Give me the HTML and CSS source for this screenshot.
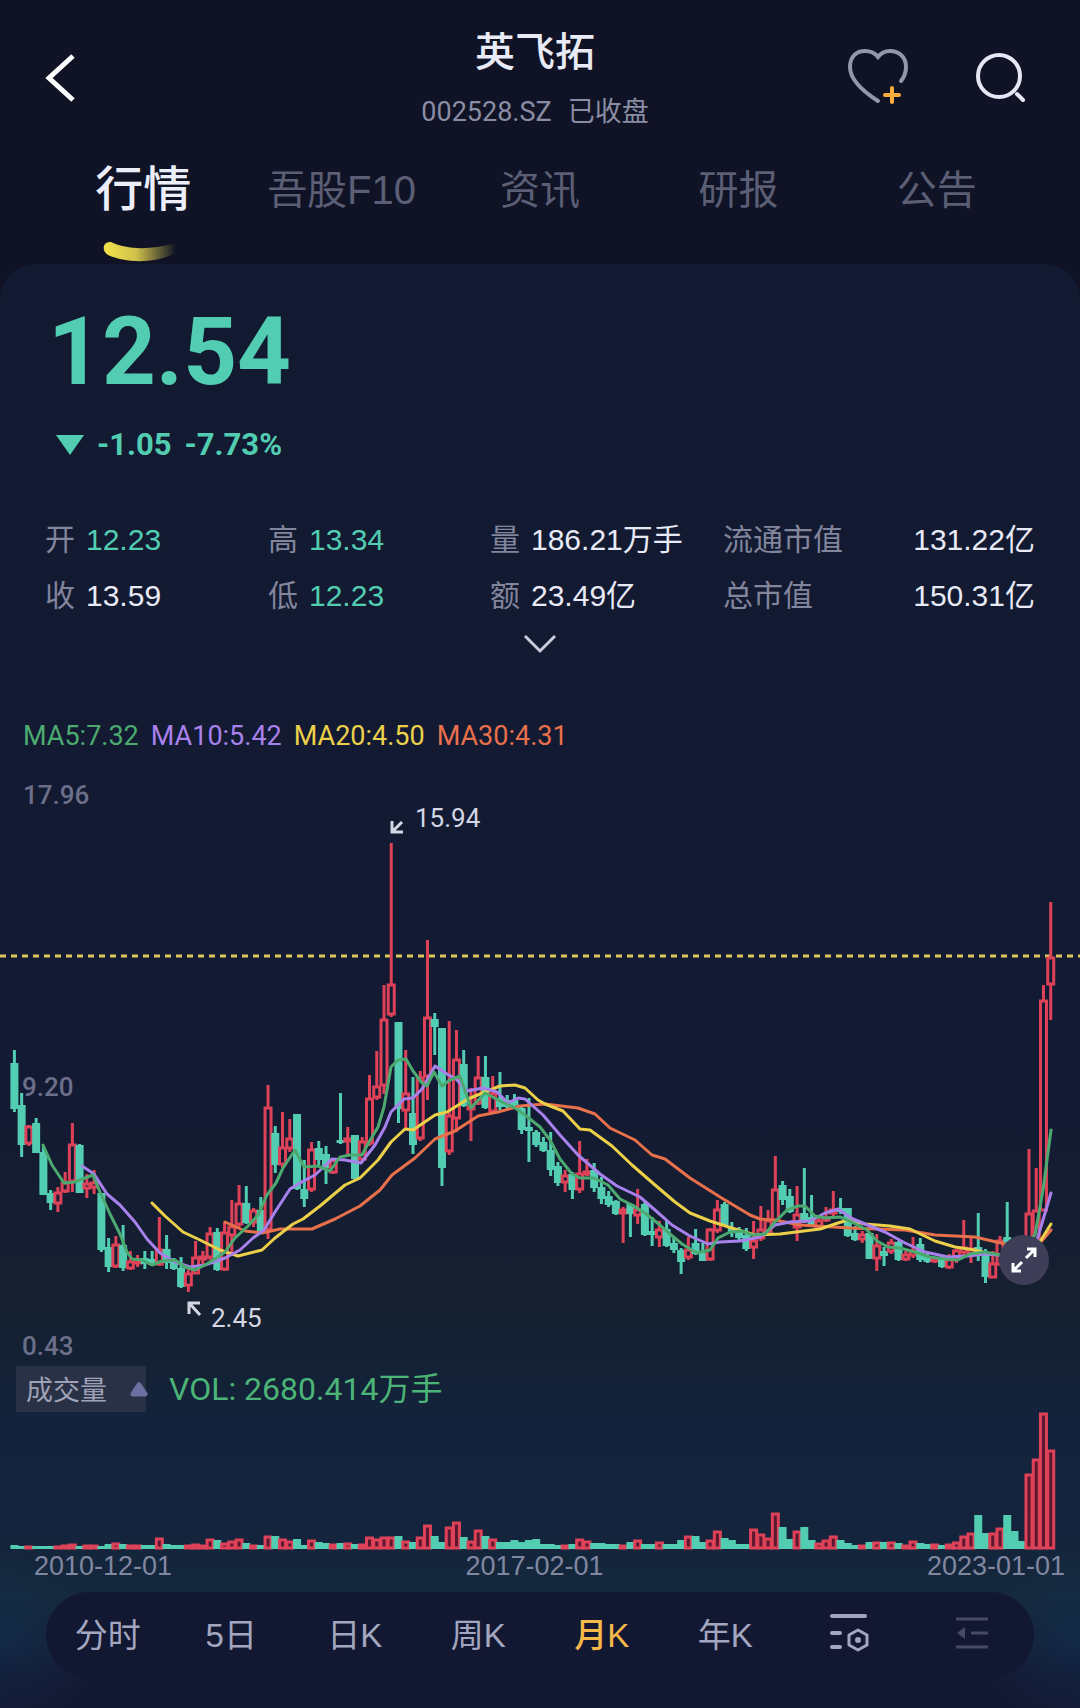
FILE: index.html
```
<!DOCTYPE html>
<html lang="zh-CN">
<head>
    <meta charset="utf-8">
    <meta name="viewport" content="width=device-width, initial-scale=1">
    <title>英飞拓 002528.SZ</title>
    <link rel="stylesheet" href="styles.css">
</head>
<body>
    <header class="header">
        <div class="topbar">
            <button class="icon-btn back" aria-label="返回">
                <svg width="36" height="56" viewBox="0 0 36 56"><path d="M31 6L7 28l24 22" fill="none" stroke="#fff" stroke-width="5"/></svg>
            </button>
            <div class="title">
                <h1>英飞拓</h1>
                <p><span>002528.SZ</span><span>已收盘</span></p>
            </div>
            <div class="actions">
                <button class="icon-btn" aria-label="加自选">
                    <svg width="64" height="60" viewBox="0 0 64 60" fill="none" stroke-linecap="round">
                        <path d="M32 53C18 44 4 32 4 19C4 8 11 3 19 3C25 3 29 5 32 9C35 5 39 3 44 3C53 3 60 9 60 19C60 24 59 28 55 33" stroke="#9497ab" stroke-width="4"/>
                        <path d="M46 40v14M39 47h14" stroke="#f8ae3c" stroke-width="4"/>
                    </svg>
                </button>
                <button class="icon-btn" aria-label="搜索">
                    <svg width="56" height="56" viewBox="0 0 56 56" fill="none" stroke="#e6e7f5" stroke-width="4" stroke-linecap="round">
                        <circle cx="27" cy="28" r="21"/>
                        <path d="M45 46l6 6"/>
                    </svg>
                </button>
            </div>
        </div>
        <nav class="tabs">
            <a href="#" class="tab active">行情
                <svg class="swoosh" width="76" height="24" viewBox="0 0 76 24">
                    <defs>
                        <linearGradient id="fade">
                            <stop offset="0" stop-color="#f3e24a"/>
                            <stop offset="0.45" stop-color="#cfc04a"/>
                            <stop offset="1" stop-color="#cfc04a" stop-opacity="0"/>
                        </linearGradient>
                    </defs>
                    <path d="M9 2C25 10 50 10 74 3L74 13C52 24 24 23 6 15C-1 11 1 1 9 2Z" fill="url(#fade)"/>
                </svg>
            </a>
            <a href="#" class="tab">吾股F10</a>
            <a href="#" class="tab">资讯</a>
            <a href="#" class="tab">研报</a>
            <a href="#" class="tab">公告</a>
        </nav>
    </header>

    <main class="panel">
        <section class="quote">
            <div class="price">12.54</div>
            <div class="change">
                <svg width="28" height="20" viewBox="0 0 28 20"><path d="M0 0h28L14 20z" fill="#52cdb2"/></svg>
                <span>-1.05</span>
                <span>-7.73%</span>
            </div>
        </section>

        <dl class="stats">
            <div><dt>开</dt><dd class="down">12.23</dd></div>
            <div><dt>高</dt><dd class="down">13.34</dd></div>
            <div><dt>量</dt><dd>186.21万手</dd></div>
            <div class="wide"><dt>流通市值</dt><dd>131.22亿</dd></div>
            <div><dt>收</dt><dd>13.59</dd></div>
            <div><dt>低</dt><dd class="down">12.23</dd></div>
            <div><dt>额</dt><dd>23.49亿</dd></div>
            <div class="wide"><dt>总市值</dt><dd>150.31亿</dd></div>
        </dl>
        <button class="icon-btn more" aria-label="展开">
            <svg width="34" height="20" viewBox="0 0 34 20"><path d="M2 2l15 15L32 2" fill="none" stroke="#c9cbdb" stroke-width="3"/></svg>
        </button>

        <div class="legend">
            <span class="ma5">MA5:7.32</span>
            <span class="ma10">MA10:5.42</span>
            <span class="ma20">MA20:4.50</span>
            <span class="ma30">MA30:4.31</span>
        </div>

        <div class="chart">
            <svg id="kline" viewBox="0 760 1080 606">
                <g class="axis">
                    <text x="23" y="804">17.96</text>
                    <text x="22" y="1096">9.20</text>
                    <text x="22" y="1355">0.43</text>
                </g>
                <g class="mark">
                    <text x="415" y="827">15.94</text>
                    <text x="211" y="1327">2.45</text>
                    <path d="M392 821v11h11M393 831l9-9"/>
                    <path d="M189 1314v-11h11M190 1304l10 11"/>
                </g>
            </svg>
            <button class="expand" aria-label="全屏">
                <svg width="28" height="28" viewBox="0 0 28 28" fill="none" stroke="#fff" stroke-width="3"><path d="M17 3h8v8M25 3l-9 9M3 17v8h8M3 25l9-9"/></svg>
            </button>
        </div>

        <div class="vol-head">
            <div class="picker">
                <select aria-label="指标">
                    <option>成交量</option>
                </select>
                <svg width="18" height="15" viewBox="0 0 18 15"><path d="M9 3L15 12H3z" fill="#6c70a0" stroke="#6c70a0" stroke-width="5" stroke-linejoin="round"/></svg>
            </div>
            <span class="vol">VOL: 2680.414万手</span>
        </div>
        <svg id="volume" viewBox="0 0 1080 138"></svg>
        <div class="dates"><span>2010-12-01</span><span>2017-02-01</span><span>2023-01-01</span></div>

        <div class="periods">
            <button>分时</button>
            <button>5日</button>
            <button>日K</button>
            <button>周K</button>
            <button class="active">月K</button>
            <button>年K</button>
            <button aria-label="指标设置">
                <svg width="40" height="40" viewBox="0 0 40 40" fill="none" stroke="#a3a6bf" stroke-linecap="round">
                    <path d="M3 3h33M3 20h8M3 34h8" stroke-width="4"/>
                    <path d="M29 17l9 5v10l-9 5-9-5V22z" stroke-width="3" stroke-linejoin="round"/>
                    <circle cx="29" cy="27" r="3" fill="#a3a6bf" stroke="none"/>
                </svg>
            </button>
            <button aria-label="收起">
                <svg width="34" height="34" viewBox="0 0 34 34" fill="none" stroke="#474a63" stroke-width="3">
                    <path d="M1 3h32M16 17h17M1 31h32"/>
                    <path d="M2 17l8-6v12z" fill="#474a63" stroke="none"/>
                </svg>
            </button>
        </div>
    </main>

    <script src="chart.js"></script>
</body>
</html>
```
FILE: styles.css
```
* {
    box-sizing: border-box;
}
body {
    display: flex;
    flex-direction: column;
    min-height: 100vh;
    margin: 0;
    background-color: #0f1325;
    color: #e8eaf6;
    font-family: "Liberation Sans", "Noto Sans CJK SC", sans-serif;
}
h1, p, dl, dd {
    margin: 0;
}
button, select {
    font-family: inherit;
    background: none;
    border: none;
    padding: 0;
    cursor: pointer;
}
svg {
    display: block;
}

/* header */
.topbar {
    display: grid;
    grid-template-columns: 1fr auto 1fr;
    height: 144px;
    padding: 0 52px 0 42px;
}
.back {
    justify-self: start;
    align-self: start;
    margin-top: 50px;
}
.title {
    text-align: center;
    padding-top: 22px;
}
h1 {
    font-size: 40px;
    line-height: 60px;
    font-weight: 500;
}
.title p {
    display: flex;
    justify-content: center;
    gap: 16px;
    font: 27px/32px Roboto, "Noto Sans CJK SC", sans-serif;
    margin-top: 14px;
    color: #8a8da3;
}
.actions {
    display: flex;
    justify-content: flex-end;
    align-items: flex-start;
    gap: 62px;
    padding-top: 48px;
}
.tabs {
    display: grid;
    grid-template-columns: repeat(5, 1fr);
    height: 120px;
    padding: 0 44px;
    text-align: center;
    line-height: 92px;
}
.tab {
    position: relative;
    color: #5b5e75;
    font-size: 40px;
    text-decoration: none;
}
.tab.active {
    color: #eceefa;
    font-size: 48px;
    font-weight: 500;
}
.swoosh {
    position: absolute;
    left: 58px;
    bottom: 0;
}

/* main panel */
.panel {
    flex: 1;
    border-radius: 36px 36px 0 0;
    padding-bottom: 18px;
    background:
        radial-gradient(ellipse 110px 90px at 0 1375px, rgba(18, 58, 96, 0.4), transparent),
        radial-gradient(ellipse 110px 90px at 100% 1375px, rgba(18, 58, 96, 0.4), transparent),
        linear-gradient(#121a31 0, #131a33 820px, #152030 1050px, #13233c 1160px, #13243c 1270px, #15283b 1330px, #131832 1414px);
}
.quote {
    padding: 32px 48px 0;
    font-family: Roboto, sans-serif;
    font-weight: 700;
    color: #52cdb2;
}
.price {
    font-size: 94px;
    line-height: 112px;
}
.change {
    display: flex;
    align-items: center;
    gap: 13px;
    padding: 17px 8px;
    font-size: 31px;
    line-height: 40px;
}
.stats {
    display: grid;
    grid-template-columns: 223fr 222fr 233fr 312fr;
    row-gap: 12px;
    padding: 36px 45px 0;
    font-size: 30px;
    line-height: 44px;
}
.stats div {
    display: flex;
    gap: 11px;
}
.stats .wide {
    justify-content: space-between;
}
dt {
    color: #82859c;
}
.down {
    color: #52cdb2;
}
.more {
    display: block;
    margin: 16px auto 0;
}
.legend {
    display: flex;
    gap: 12px;
    padding: 66px 23px 8px;
    font: 27px/32px Roboto, sans-serif;
}
.ma5 {
    color: #4caa70;
}
.ma10 {
    color: #a981ec;
}
.ma20 {
    color: #ecd04a;
}
.ma30 {
    color: #e8704a;
}

/* charts */
.chart {
    position: relative;
}
#kline, #volume {
    width: 100%;
}
.axis text, .mark text {
    font: 500 26px Roboto, sans-serif;
    fill: #6b6f8a;
}
.mark text {
    font-weight: 400;
    fill: #d4d6e4;
}
.mark path {
    fill: none;
    stroke: #d4d6e4;
    stroke-width: 3;
}
.line {
    fill: none;
    stroke: currentColor;
    stroke-width: 3;
    stroke-linejoin: round;
    stroke-linecap: round;
}
.rise {
    fill: none;
    stroke: #dd4259;
    stroke-width: 3;
}
.rise-bar {
    fill: #5a1830;
}
.fall {
    fill: #52cdb2;
}
.current {
    stroke: #dcc75a;
    stroke-width: 3;
    stroke-dasharray: 6 5;
}
.expand {
    position: absolute;
    right: 31px;
    bottom: 81px;
    width: 50px;
    height: 50px;
    border-radius: 50%;
    background-color: #3f3e58;
}
.expand svg {
    margin: 0 auto;
}
.vol-head {
    display: flex;
    align-items: center;
    gap: 23px;
    padding-left: 16px;
    height: 46px;
}
.picker {
    display: flex;
    align-items: center;
    height: 46px;
    background-color: #293146;
}
.picker select {
    appearance: none;
    width: 114px;
    height: 46px;
    padding: 4px 0 0 10px;
    color: #9fa2b6;
    font-size: 27px;
}
.picker svg {
    margin-right: -2px;
}
.vol {
    font: 32px/44px Roboto, "Noto Sans CJK SC", sans-serif;
    color: #4cb477;
}
.dates {
    display: grid;
    grid-template-columns: 431fr 461fr auto;
    padding: 0 15px 0 34px;
    font-size: 27px;
    line-height: 32px;
    color: #8187a0;
}

/* period switch */
.periods {
    display: grid;
    grid-template-columns: repeat(8, 1fr);
    place-items: center;
    height: 86px;
    margin: 10px 46px 0;
    padding-bottom: 4px;
    border-radius: 44px;
    background-color: #131832;
}
.periods button {
    color: #a3a6bf;
    font-size: 33px;
}
.periods .active {
    color: #f8b84a;
    font-weight: 500;
}
```
FILE: chart.js
```
// one row per month: direction (r = up, g = down), high, body top, body bottom, low, volume
const months = `
g 1050 1063 1109 1112 4|g 1093 1105 1145 1157 3|r 1125 1126 1144 1146 3|g 1118 1123 1153 1153 3
g 1145 1152 1195 1195 3|g 1190 1193 1203 1210 3|r 1187 1192 1204 1212 3|r 1172 1182 1192 1193 4
r 1123 1144 1182 1192 5|g 1144 1145 1193 1193 3|r 1174 1183 1189 1198 4|r 1170 1182 1188 1194 4
g 1193 1193 1250 1252 3|g 1238 1247 1267 1272 5|r 1236 1244 1267 1268 6|g 1225 1245 1268 1271 5
r 1251 1261 1269 1270 4|r 1255 1259 1264 1267 4|g 1251 1258 1264 1269 4|g 1251 1259 1265 1266 4
r 1217 1249 1265 1266 11|g 1235 1249 1263 1269 5|g 1258 1260 1269 1270 4|g 1257 1268 1287 1288 4
r 1269 1273 1286 1292 4|r 1241 1257 1274 1274 5|r 1251 1256 1260 1264 4|r 1227 1233 1258 1260 10
g 1228 1232 1270 1271 9|r 1222 1232 1270 1271 6|r 1200 1226 1236 1256 8|r 1185 1203 1225 1227 10
g 1186 1203 1223 1224 6|r 1208 1210 1223 1227 4|g 1197 1210 1231 1232 4|r 1085 1107 1230 1239 13
g 1126 1133 1165 1173 13|r 1112 1147 1165 1168 10|r 1119 1138 1149 1152 8|g 1114 1114 1189 1190 10
g 1160 1189 1199 1207 4|r 1142 1149 1190 1192 9|g 1141 1148 1160 1165 7|g 1146 1154 1168 1184 6
r 1158 1160 1173 1174 5|g 1093 1140 1143 1144 6|r 1127 1138 1142 1156 6|g 1135 1135 1179 1180 5
r 1137 1141 1160 1161 5|r 1075 1098 1144 1146 12|r 1051 1086 1098 1100 10|r 985 1019 1086 1094 12
r 843 984 1015 1017 12|g 1022 1022 1109 1123 13|r 1050 1093 1111 1130 8|g 1077 1113 1145 1154 7
r 1071 1077 1139 1141 12|r 940 1017 1077 1100 24|g 1013 1019 1027 1055 13|g 1028 1028 1168 1186 7
r 1021 1115 1152 1155 22|r 1030 1059 1119 1132 27|g 1050 1064 1106 1107 12|r 1088 1106 1110 1141 8
r 1056 1077 1104 1105 19|g 1056 1077 1108 1109 13|r 1076 1093 1112 1113 10|g 1072 1098 1107 1110 7
g 1095 1100 1107 1109 7|g 1094 1100 1105 1108 9|g 1106 1108 1130 1134 7|g 1098 1127 1131 1162 9
g 1130 1132 1145 1147 10|g 1137 1142 1151 1152 5|g 1132 1150 1170 1176 5|g 1162 1166 1183 1186 4
r 1170 1175 1183 1192 4|g 1172 1174 1190 1199 5|r 1141 1173 1190 1193 10|r 1159 1171 1175 1176 8
g 1163 1170 1188 1192 6|g 1177 1187 1199 1204 6|g 1191 1196 1205 1207 5|g 1200 1201 1214 1215 5
r 1207 1209 1214 1243 4|g 1203 1204 1214 1237 7|r 1189 1209 1216 1224 9|g 1201 1204 1235 1236 5
g 1217 1231 1235 1246 5|r 1221 1229 1238 1247 7|g 1221 1229 1246 1247 5|g 1238 1243 1250 1253 5
g 1248 1250 1262 1274 9|r 1237 1249 1258 1260 13|g 1229 1243 1254 1255 13|g 1243 1253 1261 1261 7
r 1228 1229 1260 1261 9|r 1200 1209 1231 1233 18|g 1202 1204 1225 1226 11|g 1222 1228 1233 1237 9
g 1227 1230 1238 1240 5|g 1228 1235 1249 1251 5|r 1221 1240 1248 1259 20|r 1206 1229 1239 1241 15
r 1210 1220 1233 1234 11|r 1156 1189 1221 1222 36|g 1181 1185 1200 1205 22|g 1189 1196 1212 1213 10
r 1186 1214 1228 1241 18|g 1168 1213 1221 1223 22|g 1195 1217 1226 1227 9|r 1218 1220 1229 1230 6
r 1207 1217 1221 1222 9|r 1191 1209 1214 1216 13|g 1198 1208 1212 1214 9|g 1208 1208 1236 1237 6
g 1226 1233 1240 1241 4|r 1231 1234 1240 1243 4|g 1232 1233 1259 1259 7|r 1234 1245 1259 1271 7
g 1247 1251 1256 1266 7|r 1239 1242 1252 1254 7|g 1241 1242 1260 1261 6|r 1251 1254 1260 1261 4
r 1237 1250 1256 1258 8|g 1238 1244 1260 1262 6|g 1253 1256 1262 1263 5|r 1257 1259 1261 1263 5
g 1256 1258 1267 1268 4|r 1254 1259 1268 1269 5|r 1249 1250 1258 1263 7|r 1220 1247 1253 1255 13
r 1236 1248 1254 1263 16|g 1213 1247 1254 1261 34|g 1249 1252 1277 1283 16|r 1251 1263 1278 1278 16
r 1236 1240 1265 1266 21|g 1202 1237 1260 1262 34|g 1240 1244 1258 1262 18|g 1242 1250 1260 1264 8
r 1149 1213 1260 1262 75|r 1168 1210 1260 1262 90|r 985 1000 1211 1211 136|r 902 957 985 1020 99
`.trim().split(/[|\n]/).map(row => row.split(' '));

const averages = {
    ma30: '225,1222 245,1231 262,1233 280,1229 312,1229 335,1219 360,1206 380,1190 392,1175 415,1158 435,1139 455,1131 478,1116 498,1112 520,1106 545,1104 578,1108 595,1114 610,1128 635,1140 652,1155 665,1159 690,1178 720,1197 750,1215 760,1219 775,1220 800,1225 850,1228 905,1230 935,1235 975,1237 1005,1244 1030,1250 1040,1243 1051,1230',
    ma20: '152,1203 165,1216 183,1232 200,1240 220,1250 238,1256 262,1250 275,1238 293,1224 303,1219 320,1206 345,1185 360,1178 378,1160 391,1142 405,1129 413,1130 435,1115 447,1112 468,1099 485,1092 500,1086 515,1085 525,1088 538,1100 545,1104 563,1111 580,1129 590,1130 612,1146 632,1165 655,1185 675,1202 690,1213 710,1221 735,1229 755,1235 780,1234 820,1229 838,1223 848,1220 865,1224 890,1226 910,1229 935,1241 955,1247 975,1250 990,1254 1005,1255 1030,1256 1041,1240 1051,1224',
    ma10: '82,1166 94,1174 107,1194 120,1205 135,1222 147,1239 160,1253 175,1262 190,1267 205,1265 225,1258 240,1250 253,1238 264,1230 275,1212 290,1189 300,1183 315,1175 332,1159 345,1160 361,1163 375,1145 385,1127 391,1112 404,1099 413,1098 422,1089 435,1066 447,1074 456,1079 467,1091 483,1088 497,1092 508,1103 518,1098 525,1099 543,1115 560,1135 578,1155 600,1174 617,1186 640,1197 655,1210 672,1225 690,1236 708,1244 720,1242 740,1241 760,1237 775,1225 790,1222 810,1221 825,1213 838,1209 853,1219 870,1226 885,1232 905,1243 925,1252 948,1257 968,1256 985,1254 1010,1256 1030,1252 1037,1240 1051,1193',
    ma5: '43,1145 52,1165 58,1174 64,1183 75,1182 85,1178 93,1175 100,1192 110,1214 120,1234 127,1252 132,1259 142,1260 152,1265 162,1261 175,1260 185,1267 195,1270 205,1265 215,1259 225,1252 235,1238 248,1226 258,1215 267,1195 276,1183 283,1168 295,1150 304,1167 318,1166 330,1171 340,1157 350,1155 362,1155 369,1142 378,1127 384,1107 391,1067 398,1060 406,1059 413,1071 422,1083 427,1086 434,1072 442,1086 450,1080 460,1076 471,1108 485,1093 500,1101 515,1108 525,1115 540,1127 550,1140 560,1159 572,1174 580,1178 594,1178 608,1185 620,1199 632,1205 645,1213 660,1225 670,1234 682,1244 697,1253 710,1250 718,1238 730,1232 742,1231 752,1235 765,1234 775,1222 787,1210 798,1206 805,1206 815,1216 825,1218 840,1217 852,1222 867,1230 877,1241 888,1247 900,1248 915,1252 930,1257 945,1259 958,1260 970,1254 985,1252 1000,1255 1012,1250 1025,1245 1035,1235 1043,1190 1051,1130'
};

const step = 7.247;
let candles = '';
let bars = '';

months.forEach(([dir, ...values], i) => {
    const [high, top, bottom, low, vol] = values.map(Number);
    const x = 14.4 + i * step;
    if (dir === 'r') {
        const body = Math.max(bottom - top - 2, 1);
        candles += `<path class="rise" d="M${x} ${high}V${top}M${x} ${bottom}V${low}M${x - 3} ${top + 1}h6v${body}h-6z"/>`;
        bars += `<path class="rise rise-bar" d="M${x - 3} ${138 - vol}h6V136h-6z"/>`;
    } else {
        candles += `<path class="fall" d="M${x - 4} ${top}h8V${bottom}h-8zM${x - 1.5} ${high}h3V${low}h-3z"/>`;
        bars += `<path class="fall" d="M${x - 4} ${137 - vol}h8V137h-8z"/>`;
    }
});

const lines = Object.keys(averages).map(name =>
    `<polyline class="line ${name}" points="${averages[name]}"/>`).join('');

document.getElementById('kline').insertAdjacentHTML('beforeend',
    '<line class="current" x1="0" x2="1080" y1="956" y2="956"/>' + candles + lines);
document.getElementById('volume').innerHTML = bars;
```
